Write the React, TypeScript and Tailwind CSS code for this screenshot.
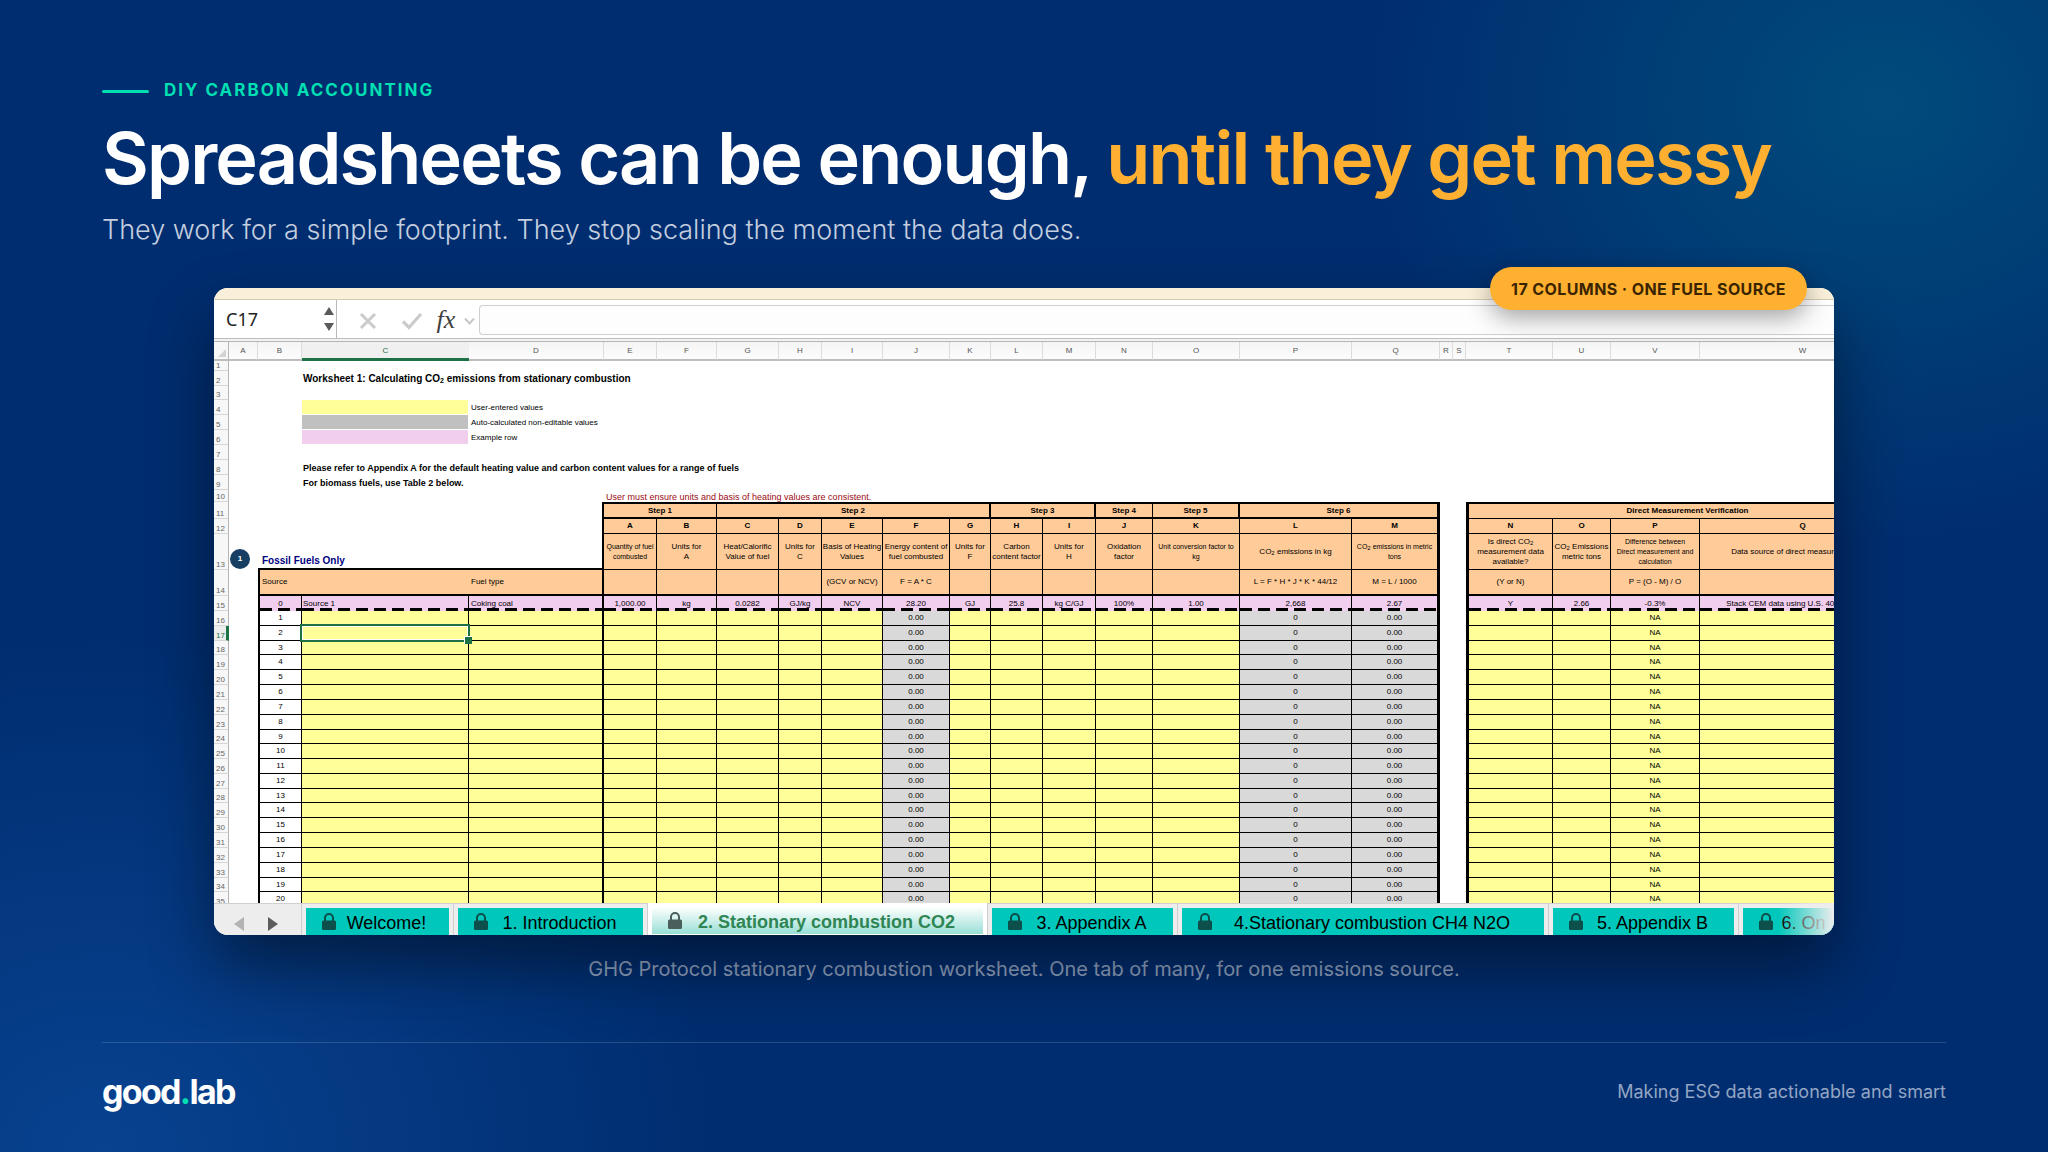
import type { ReactNode } from "react";

const columns = [
  { letter: "A", col: "w-[29px]" },
  { letter: "B", col: "w-[44px]" },
  { letter: "C", col: "w-[167px]" },
  { letter: "D", col: "w-[135px]" },
  { letter: "E", col: "w-[53px]" },
  { letter: "F", col: "w-[60px]" },
  { letter: "G", col: "w-[62px]" },
  { letter: "H", col: "w-[43px]" },
  { letter: "I", col: "w-[61px]" },
  { letter: "J", col: "w-[67px]" },
  { letter: "K", col: "w-[41px]" },
  { letter: "L", col: "w-[52px]" },
  { letter: "M", col: "w-[53px]" },
  { letter: "N", col: "w-[57px]" },
  { letter: "O", col: "w-[87px]" },
  { letter: "P", col: "w-[112px]" },
  { letter: "Q", col: "w-[88px]" },
  { letter: "R", col: "w-[13px]" },
  { letter: "S", col: "w-[13px]" },
  { letter: "T", col: "w-[87px]" },
  { letter: "U", col: "w-[58px]" },
  { letter: "V", col: "w-[89px]" },
  { letter: "W", col: "w-[206px]" },
];

type Field = {
  id: string;
  title?: ReactNode;
  formula?: string;
  example?: string;
  value?: string;
  grey?: boolean;
  tight?: boolean;
  edge?: string;
};

const Sub = () => <sub className="text-[6px] leading-none">2</sub>;

const mainFields: Field[] = [
  { id: "A", title: <>Quantity of fuel<br />combusted</>, example: "1,000.00", tight: true },
  { id: "B", title: <>Units for<br />A</>, example: "kg" },
  { id: "C", title: <>Heat/Calorific<br />Value of fuel</>, example: "0.0282" },
  { id: "D", title: <>Units for<br />C</>, example: "GJ/kg" },
  { id: "E", title: <>Basis of Heating<br />Values</>, formula: "(GCV or NCV)", example: "NCV" },
  { id: "F", title: <>Energy content of<br />fuel combusted</>, formula: "F = A * C", example: "28.20", value: "0.00", grey: true },
  { id: "G", title: <>Units for<br />F</>, example: "GJ" },
  { id: "H", title: <>Carbon<br />content factor</>, example: "25.8" },
  { id: "I", title: <>Units for<br />H</>, example: "kg C/GJ" },
  { id: "J", title: <>Oxidation<br />factor</>, example: "100%" },
  { id: "K", title: <>Unit conversion factor to<br />kg</>, example: "1.00", tight: true },
  { id: "L", title: <>CO<Sub /> emissions in kg</>, formula: "L = F * H * J * K * 44/12", example: "2,668", value: "0", grey: true },
  { id: "M", title: <>CO<Sub /> emissions in metric<br />tons</>, formula: "M = L / 1000", example: "2.67", value: "0.00", grey: true, tight: true, edge: "border-r-3" },
];

const directFields: Field[] = [
  { id: "N", title: <>Is direct CO<Sub /><br />measurement data<br />available?</>, formula: "(Y or N)", example: "Y", edge: "border-l-3" },
  { id: "O", title: <>CO<Sub /> Emissions<br />metric tons</>, example: "2.66" },
  { id: "P", title: <>Difference between<br />Direct measurement and<br />calculation</>, formula: "P = (O - M) / O", example: "-0.3%", value: "NA", tight: true },
  { id: "Q", title: "Data source of direct measurement data", example: "Stack CEM data using U.S. 40CFR Part 75" },
];

const shortRows = [3, 18, 24, 28, 34];
const dataRows = Array.from({ length: 20 }, (_, i) => ({ row: 16 + i, n: i + 1 }));

const line = "border-black border-b border-r";
const peach = "bg-[#ffcb99]";
const pink = "bg-[#f1cdee]";
const yellow = "bg-[#fffe99]";
const dash =
  "bg-[image:repeating-linear-gradient(90deg,#000_0_12px,transparent_12px_18px)] bg-[length:100%_3px] bg-bottom bg-no-repeat";

function RowHead({ n, active }: { n: number; active?: boolean }) {
  return (
    <th
      scope="row"
      className={`border-b border-b-[#d6d6d6] pl-0.5 text-left align-bottom text-[8px] leading-[9px] font-normal ${
        active
          ? "border-r-3 border-r-[#1e7145] bg-[#ececec] text-[#1e7145]"
          : "border-r border-r-[#b5b5b5] bg-[#f7f7f7] text-[#666]"
      }`}
    >
      {n}
    </th>
  );
}

function rowHeight(n: number) {
  return shortRows.includes(n) ? "h-[14px]" : "h-[15px]";
}

function NoteRow({ n, height, swatch, c, d, e }: {
  n: number;
  height?: string;
  swatch?: string;
  c?: ReactNode;
  d?: string;
  e?: string;
}) {
  return (
    <tr className={`text-left ${height ?? rowHeight(n)}`}>
      <RowHead n={n} />
      <td />
      <td />
      <td className={swatch ? `border-r border-b border-white ${swatch}` : ""}>
        <div className="w-0 pl-px">{c}</div>
      </td>
      <td>
        <div className="pl-0.5">{d}</div>
      </td>
      <td className="align-top text-[9px] text-[#9c0a12]" colSpan={19}>
        {e && <div className="h-[11px] pl-0.5 leading-[15px]">{e}</div>}
      </td>
    </tr>
  );
}

function FieldRow({ cell, content, tone }: {
  cell?: string;
  content: (f: Field) => ReactNode;
  tone: (f: Field) => string;
}) {
  const make = (f: Field) => (
    <td key={f.id} className={`${line} ${f.edge ?? ""} ${tone(f)} ${cell ?? ""}`}>
      <div className="flex justify-center">
        <span>{content(f)}</span>
      </div>
    </td>
  );
  return (
    <>
      {mainFields.map(make)}
      <td />
      <td />
      {directFields.map(make)}
    </>
  );
}

function Worksheet() {
  return (
    <table className="w-[1692px] table-fixed border-separate border-spacing-0 text-center text-[8px] leading-[10px] whitespace-nowrap text-black">
      <colgroup>
        <col className="w-[15px]" />
        {columns.map((c) => (
          <col key={c.letter} className={c.col} />
        ))}
      </colgroup>
      <thead>
        <tr className="h-[19px]">
          <td className="border-r border-b-2 border-r-[#b5b5b5] border-b-[#bdbdbd] bg-[#f7f7f7]">
            <svg viewBox="0 0 8 8" className="mt-1 ml-1 size-2" aria-hidden="true">
              <path d="M8 0V8H0Z" fill="#d2d2d2" />
            </svg>
          </td>
          {columns.map((c) => (
            <th
              key={c.letter}
              scope="col"
              className={
                c.letter === "C"
                  ? "border-b-3 border-[#1e7145] bg-[#f0f0f0] pt-px font-normal text-[#1e7145]"
                  : "border-r border-b-2 border-r-[#dcdcdc] border-b-[#bdbdbd] bg-linear-to-b from-[#f4f4f4] to-[#fdfdfd] font-normal text-[#555]"
              }
            >
              {c.letter}
            </th>
          ))}
        </tr>
      </thead>
      <tbody>
        <NoteRow n={1} height="h-[10px]" />
        <NoteRow
          n={2}
          c={
            <h2 className="text-[10px] font-bold">
              Worksheet 1: Calculating CO<sub className="text-[7px] leading-none">2</sub> emissions from stationary combustion
            </h2>
          }
        />
        <NoteRow n={3} />
        <NoteRow n={4} swatch="bg-[#fffe99]" d="User-entered values" />
        <NoteRow n={5} swatch="bg-[#c0c0c0]" d="Auto-calculated non-editable values" />
        <NoteRow n={6} swatch="bg-[#f1cdee]" d="Example row" />
        <NoteRow n={7} />
        <NoteRow
          n={8}
          c={<p className="text-[9px] font-bold">Please refer to Appendix A for the default heating value and carbon content values for a range of fuels</p>}
        />
        <NoteRow n={9} c={<p className="text-[9px] font-bold">For biomass fuels, use Table 2 below.</p>} />
        <NoteRow n={10} height="h-3" e="User must ensure units and basis of heating values are consistent." />

        <tr className="h-[17px] font-bold">
          <RowHead n={11} />
          <td />
          <td />
          <td />
          <td className="border-r-2" />
          <td colSpan={2} className={`border-t-2 border-r border-b-2 ${peach}`}>Step 1</td>
          <td colSpan={5} className={`border-t-2 border-r-2 border-b-2 ${peach}`}>Step 2</td>
          <td colSpan={2} className={`border-t-2 border-r-2 border-b-2 ${peach}`}>Step 3</td>
          <td className={`border-t-2 border-r border-b-2 ${peach}`}>Step 4</td>
          <td className={`border-t-2 border-r-2 border-b-2 ${peach}`}>Step 5</td>
          <td colSpan={2} className={`border-t-2 border-r-3 border-b-2 ${peach}`}>Step 6</td>
          <td />
          <td />
          <td colSpan={4} className={`border-t-2 border-b border-l-3 ${peach}`}>Direct Measurement Verification</td>
        </tr>
        <tr className="h-[15px] font-bold">
          <RowHead n={12} />
          <td />
          <td />
          <td />
          <td className="border-r-2" />
          <FieldRow content={(f) => f.id} tone={() => peach} />
        </tr>
        <tr className="h-9">
          <RowHead n={13} />
          <td className="align-bottom">
            <span className="mb-px ml-px flex size-5 items-center justify-center rounded-full bg-[#163f63] font-bold text-white">1</span>
          </td>
          <td className="border-b-2 align-bottom">
            <div className="w-0 pb-0.5 pl-1 text-left text-[10px] font-bold text-[#00007f]">Fossil Fuels Only</div>
          </td>
          <td className="border-b-2" />
          <td className="border-r-2 border-b-2" />
          <FieldRow
            content={(f) => <span className={f.tight ? "text-[7px]" : ""}>{f.title}</span>}
            tone={() => peach}
          />
        </tr>
        <tr className="h-[26px]">
          <RowHead n={14} />
          <td />
          <td className={`border-b-2 border-l-2 ${peach}`}>
            <div className="pl-0.5 text-left">Source</div>
          </td>
          <td className={`border-b-2 ${peach}`} />
          <td className={`border-r-2 border-b-2 ${peach}`}>
            <div className="pl-0.5 text-left">Fuel type</div>
          </td>
          <FieldRow content={(f) => f.formula} tone={() => peach} cell="border-b-2" />
        </tr>
        <tr className="h-[15px]">
          <RowHead n={15} />
          <td />
          <td className={`border-r border-l-2 ${pink} ${dash}`}>0</td>
          <td className={`border-r ${pink} ${dash}`}>
            <div className="pl-px text-left">Source 1</div>
          </td>
          <td className={`border-r-2 ${pink} ${dash}`}>
            <div className="pl-0.5 text-left">Coking coal</div>
          </td>
          <FieldRow content={(f) => f.example} tone={() => `${pink} ${dash}`} cell="border-b-0" />
        </tr>
        {dataRows.map(({ row, n }) => (
          <tr key={row} className={rowHeight(row)}>
            <RowHead n={row} active={row === 17} />
            <td />
            <td className={`${line} border-l-2`}>{n}</td>
            <td className={`${line} ${yellow} relative`}>
              {row === 17 && (
                <div className="absolute -inset-x-0.5 -inset-y-0.5 z-10 border-2 border-[#1e7145]">
                  <div className="h-full border border-white" />
                  <div className="absolute -right-1 -bottom-1 size-2 border-t border-l border-white bg-[#1e7145]" />
                </div>
              )}
            </td>
            <td className={`${line} border-r-2 ${yellow}`} />
            <FieldRow content={(f) => f.value} tone={(f) => (f.grey ? "bg-[#d9d9d9]" : yellow)} />
          </tr>
        ))}
      </tbody>
    </table>
  );
}

function FormulaBar() {
  return (
    <div className="flex h-[39px] items-center border-b border-[#bdbdbd] bg-white">
      <div className="flex h-full w-[123px] items-center justify-between border-r border-[#b9b9b9] pr-0.5 pl-3">
        <input
          aria-label="Cell name"
          defaultValue="C17"
          className="w-20 bg-transparent font-['Noto_Sans','Open_Sans',sans-serif] text-[18px] text-[#222] outline-none"
        />
        <svg viewBox="0 0 10 26" className="h-[26px] w-2.5" fill="#5a5a5a" aria-hidden="true">
          <path d="M5 1 10 9H0ZM5 25 10 17H0Z" />
        </svg>
      </div>
      <button aria-label="Cancel" className="mt-1 ml-[22px]">
        <svg viewBox="0 0 18 18" className="size-[18px]" fill="none" stroke="#cbcbcb" strokeWidth="3" aria-hidden="true">
          <path d="M2 2 16 16M16 2 2 16" />
        </svg>
      </button>
      <button aria-label="Enter" className="mt-1 ml-6">
        <svg viewBox="0 0 22 18" className="h-[18px] w-[22px]" fill="none" stroke="#cbcbcb" strokeWidth="3.2" aria-hidden="true">
          <path d="M2 9.500 8 15.500 20 2" />
        </svg>
      </button>
      <button className="mt-0.5 ml-3 w-[22px] text-center font-['Liberation_Serif',serif] text-[26px] leading-none text-[#3f3f3f] italic">fx</button>
      <button aria-label="Function list" className="mt-1 ml-[7px]">
        <svg viewBox="0 0 11 8" className="h-2 w-[11px]" fill="none" stroke="#c8c8c8" strokeWidth="2" aria-hidden="true">
          <path d="M1 1.500 5.500 6.500 10 1.500" />
        </svg>
      </button>
      <input aria-label="Formula" className="mt-0.5 ml-1 h-[30px] min-w-0 flex-1 rounded-l border border-r-0 border-[#cfcfcf] bg-[#fdfdfd] outline-none" />
    </div>
  );
}

function Lock({ className }: { className: string }) {
  return (
    <svg viewBox="0 0 14 17" className={`h-[17px] w-3.5 shrink-0 ${className}`} aria-hidden="true">
      <path d="M3 8V5a4 4 0 0 1 8 0V8" fill="none" stroke="currentColor" strokeWidth="2" />
      <rect y="7.500" width="14" height="9.500" rx="1.500" fill="currentColor" />
    </svg>
  );
}

const tabs = [
  { label: "Welcome!", width: "w-[152px]" },
  { label: "1. Introduction", width: "w-[194px]" },
  { label: "2. Stationary combustion CO2", width: "w-[340px]", active: true },
  { label: "3. Appendix A", width: "w-[190px]" },
  { label: "4.Stationary combustion CH4 N2O", width: "w-[371px]" },
  { label: "5. Appendix B", width: "w-[190px]" },
  { label: "6. On", width: "w-[112px]" },
];

function SheetTabs() {
  return (
    <nav aria-label="Worksheets" className="relative flex h-8 overflow-hidden bg-[#ededed]">
      <div className="flex w-[88px] shrink-0 items-center gap-6 border-t border-r border-[#cfcfcf] pt-2 pl-5">
        <button aria-label="Previous sheets">
          <svg viewBox="0 0 10 14" className="h-3.5 w-2.5" fill="#b3b3b3" aria-hidden="true">
            <path d="M10 0V14L0 7Z" />
          </svg>
        </button>
        <button aria-label="Next sheets">
          <svg viewBox="0 0 10 14" className="h-3.5 w-2.5" fill="#5c5c5c" aria-hidden="true">
            <path d="M0 0V14L10 7Z" />
          </svg>
        </button>
      </div>
      {tabs.map((t) => (
        <button
          key={t.label}
          className={`${t.width} shrink-0 border-r border-[#cfcfcf] px-1 pt-1 ${t.active ? "bg-white pb-px" : "border-t"}`}
        >
          <span
            className={`flex h-full items-center pr-3 pl-4 text-[18px] leading-none whitespace-nowrap ${
              t.active
                ? "bg-linear-to-b from-white to-[#96dfd6] font-bold text-[#2f8554]"
                : "bg-[#00c7bb] text-black"
            }`}
          >
            <Lock className={t.active ? "text-[#4a5f5c]" : "text-[#0d4f4b]"} />
            <span className="flex-1 pt-0.5 text-center">{t.label}</span>
          </span>
        </button>
      ))}
      <div className="absolute inset-y-0 right-0 w-14 bg-linear-to-r from-[#ededed]/0 to-[#ededed]" />
    </nav>
  );
}

export default function App() {
  return (
    <main className="flex min-h-screen flex-col bg-[#002d6f] bg-[radial-gradient(ellipse_520px_440px_at_92%_9%,#004b7c_0%,transparent_100%),radial-gradient(ellipse_620px_520px_at_5%_100%,#084290_0%,transparent_100%)] px-[102px] pt-[79px] font-['Inter',sans-serif]">
      <header>
        <div className="flex h-6 items-center gap-[15px]">
          <span className="h-[3px] w-[47px] rounded-full bg-[#00dfb2]" />
          <p className="text-[17px] font-bold tracking-[2px] text-[#00dfb2]">DIY CARBON ACCOUNTING</p>
        </div>
        <h1 className="mt-[15px] text-[72px] leading-[80px] font-semibold tracking-tight text-white">
          Spreadsheets can be enough, <span className="text-[#ffb030]">until they get messy</span>
        </h1>
        <p className="mt-3.5 text-[27px] leading-9 font-light text-[#c3cedf]">
          They work for a simple footprint. They stop scaling the moment the data does.
        </p>
      </header>

      <figure className="mx-[112px] mt-10">
        <div className="relative rounded-[14px] shadow-[0_32px_64px_rgba(0,0,0,0.45)]">
          <div className="overflow-hidden rounded-[14px] bg-white font-['Liberation_Sans',sans-serif]">
            <div className="h-3 border-b border-[#d5ccb4] bg-[#faf0d9]" />
            <FormulaBar />
            <div className="h-[3px] border-b border-[#b5b5b5] bg-[#f2f2f2]" />
            <div className="h-[561px] overflow-hidden">
              <Worksheet />
            </div>
            <SheetTabs />
          </div>
          <span className="absolute -top-[21px] right-[27px] flex h-[43px] items-center rounded-full bg-[#ffb030] px-[21px] text-[16px] font-bold tracking-wide text-[#3a2400] shadow-[0_8px_24px_rgba(0,0,0,0.35)]">
            17 COLUMNS · ONE FUEL SOURCE
          </span>
        </div>
        <figcaption className="mt-5 text-center text-[20px] leading-7 text-[#93a5c4]">
          GHG Protocol stationary combustion worksheet. One tab of many, for one emissions source.
        </figcaption>
      </figure>

      <footer className="mt-auto flex h-[110px] items-center justify-between border-t border-white/15 pb-3">
        <p className="text-[34px] leading-10 font-bold tracking-tighter text-white">
          good<span className="text-[#00dfb2]">.</span>lab
        </p>
        <p className="text-[18px] leading-7 text-[#93a5c4]">Making ESG data actionable and smart</p>
      </footer>
    </main>
  );
}
